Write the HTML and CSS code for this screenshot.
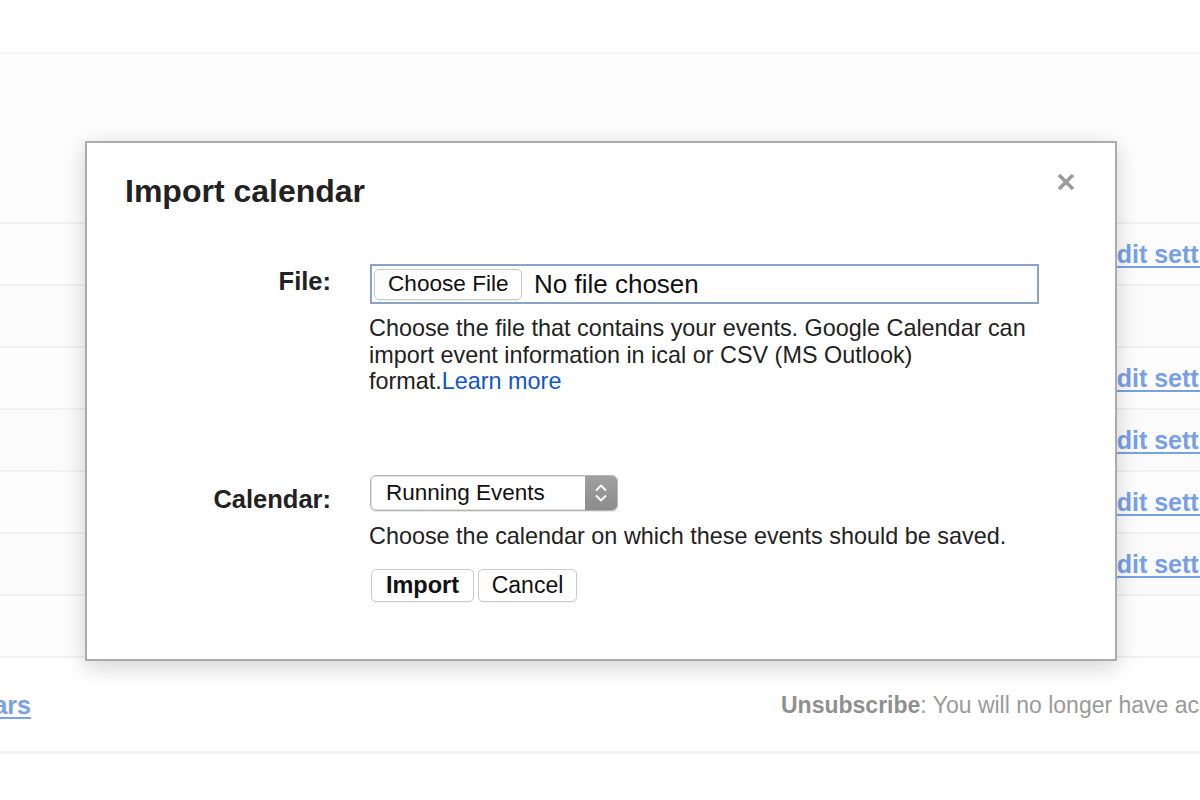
FILE: index.html
```html
<!DOCTYPE html>
<html>
<head>
<meta charset="utf-8">
<link rel="stylesheet" href="styles.css">
</head>
<body>
<div class="page">
  <div class="topbar"></div>
  <div class="head-space"></div>
  <div class="rows">
    <div class="row"><a class="bg-link" href="#">Edit settings</a></div>
    <div class="row"></div>
    <div class="row"><a class="bg-link" href="#">Edit settings</a></div>
    <div class="row"><a class="bg-link" href="#">Edit settings</a></div>
    <div class="row"><a class="bg-link" href="#">Edit settings</a></div>
    <div class="row"><a class="bg-link" href="#">Edit settings</a></div>
    <div class="row"></div>
  </div>
  <div class="footer">
    <div class="foot-left"><a class="foot-link" href="#">Browse calendars</a></div>
    <div class="foot-note"><b>Unsubscribe</b>: You will no longer have access</div>
  </div>
</div>

<div class="dialog">
  <div class="dlg-title">Import calendar</div>
  <button class="close" aria-label="Close">
    <svg width="20" height="20" viewBox="0 0 20 20"><path d="M3 3 L17 17 M17 3 L3 17" stroke="#9b9b9b" stroke-width="3.6" stroke-linecap="butt"/></svg>
  </button>
  <div class="form">
    <div class="frow file-row">
      <div class="label">File:</div>
      <div class="field">
        <div class="file-input"><span class="choose-btn">Choose File</span><span class="no-file">No file chosen</span></div>
        <p class="help">Choose the file that contains your events. Google Calendar can import event information in ical or CSV (MS Outlook) format.<a class="learn" href="#">Learn more</a></p>
      </div>
    </div>
    <div class="frow cal-row">
      <div class="label">Calendar:</div>
      <div class="field">
        <div class="select"><span class="sel-text">Running Events</span><span class="stepper"><svg width="16" height="24" viewBox="0 0 16 24"><path d="M3 9.5 L8 4.5 L13 9.5 M3 14.5 L8 19.5 L13 14.5" fill="none" stroke="#fff" stroke-width="1.9"/></svg></span></div>
        <p class="help help2">Choose the calendar on which these events should be saved.</p>
        <div class="buttons"><span class="btn btn-primary">Import</span><span class="btn btn-cancel">Cancel</span></div>
      </div>
    </div>
  </div>
</div>
</body>
</html>
```
FILE: styles.css
```css
* { box-sizing: border-box; }
html, body { margin: 0; padding: 0; }
body {
  width: 1200px;
  height: 800px;
  overflow: hidden;
  background: #fff;
  font-family: "Liberation Sans", Arial, Helvetica, sans-serif;
  color: #222;
  position: relative;
}
.page { width: 1200px; }
.topbar { height: 54px; border-bottom: 2px solid #f3f3f3; }
.head-space { height: 168px; background: #fdfdfd; }
.rows { border-bottom: 2px solid #f1f1f1; }
.row {
  height: 62px;
  border-top: 2px solid #f1f1f1;
  background: #fdfdfd;
  display: flex;
  align-items: center;
  padding-left: 1100px;
  white-space: nowrap;
  overflow: hidden;
}
.row:nth-child(even) { background: #fbfbfb; }
.bg-link {
  font-size: 25px;
  font-weight: bold;
  color: #78a0e6;
  text-decoration: underline;
  text-decoration-thickness: 2px;
  text-underline-offset: 3px;
}
.footer {
  height: 96px;
  border-bottom: 3px solid #f1f1f1;
  display: flex;
  align-items: center;
  white-space: nowrap;
  overflow: hidden;
  padding-top: 2px;
}
.foot-left {
  width: 31px;
  flex: none;
  display: flex;
  justify-content: flex-end;
}
.foot-link {
  flex: none;
  font-size: 25px;
  font-weight: bold;
  color: #78a0e6;
  text-decoration: underline;
  text-decoration-thickness: 2px;
  text-underline-offset: 3px;
}
.foot-note { font-size: 23px; color: #9a9a9a; margin-left: 750px; }
.foot-note b { color: #8f8f8f; }

.dialog {
  position: absolute;
  left: 85px;
  top: 141px;
  width: 1032px;
  height: 520px;
  background: #fff;
  border: 2px solid #ababab;
  box-shadow: 0 6px 22px rgba(0,0,0,0.18);
  padding: 30px 38px 0 38px;
}
.dlg-title { font-size: 32px; font-weight: bold; color: #222; line-height: 36px; }
.close {
  position: absolute;
  top: 27px;
  right: 37px;
  width: 24px;
  height: 24px;
  padding: 2px;
  border: 0;
  background: none;
}
.close svg { display: block; }
.form { margin-top: 55px; }
.frow { display: grid; grid-template-columns: 206px 1fr; column-gap: 39px; }
.label {
  font-size: 25.5px;
  font-weight: bold;
  text-align: right;
  color: #222;
  line-height: 29px;
}
.file-row .label { padding-top: 3px; }
.cal-row { margin-top: 80px; }
.cal-row .label { padding-top: 10px; }
.field { width: 669px; }
.file-input {
  height: 40px;
  border: 2px solid #8ba3c8;
  display: flex;
  align-items: center;
  padding-left: 2px;
}
.choose-btn {
  height: 31px;
  width: 148px;
  border: 1px solid #c9c9c9;
  border-radius: 5px;
  background: #fff;
  font-size: 22.6px;
  color: #111;
  display: flex;
  align-items: center;
  padding-left: 13px;
  box-shadow: 0 1px 1px rgba(0,0,0,0.06);
}
.no-file { font-size: 26px; color: #111; margin-left: 12px; }
.help { margin: 11px 0 0 -1px; font-size: 23.4px; line-height: 26.5px; color: #222; }
.learn { color: #1155cc; text-decoration: none; }
.select {
  width: 248px;
  height: 36px;
  border: 1px solid #b5b5b5;
  border-radius: 6px;
  box-shadow: inset 0 0 0 1px #e0e0e0, 0 1px 1px rgba(0,0,0,0.1);
  display: flex;
  align-items: center;
  justify-content: space-between;
  overflow: hidden;
  background: #fff;
}
.sel-text { font-size: 22.5px; color: #111; padding-left: 15px; }
.stepper {
  width: 32px;
  height: 100%;
  background: linear-gradient(#a0a0a0, #8c8c8c);
  display: flex;
  align-items: center;
  justify-content: center;
}
.help2 { margin-top: 12px; }
.buttons { display: flex; gap: 4px; margin-top: 20px; margin-left: 1px; }
.btn {
  height: 33px;
  border: 1px solid #cbcbcb;
  border-radius: 5px;
  background: #fff;
  font-size: 23px;
  color: #111;
  display: flex;
  align-items: center;
  justify-content: center;
  box-shadow: 0 1px 1px rgba(0,0,0,0.06);
}
.btn-primary { font-weight: bold; width: 103px; font-size: 23.5px; }
.btn-cancel { width: 99px; }
```
